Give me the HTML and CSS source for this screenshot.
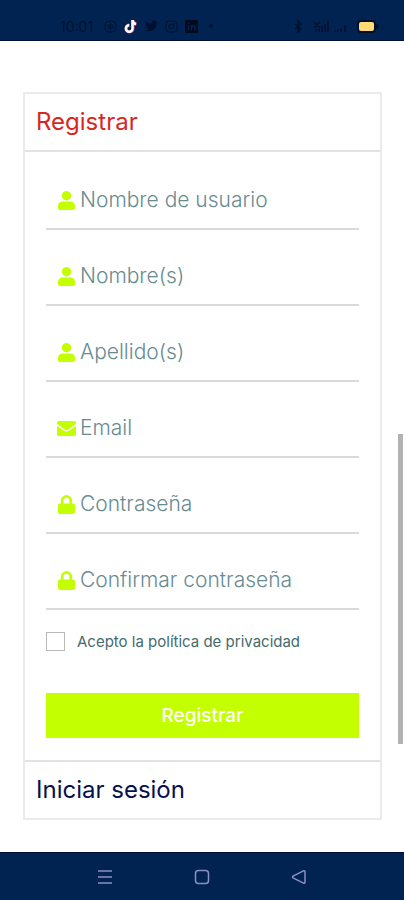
FILE: index.html
```html
<!DOCTYPE html>
<html lang="es">
<head>
<meta charset="utf-8">
<meta name="viewport" content="width=device-width, initial-scale=1">
<title>Registrar</title>
<link rel="stylesheet" href="styles.css">
</head>
<body>
<svg class="sprite" aria-hidden="true">
  <symbol id="user" viewBox="0 0 18 20"><circle cx="9" cy="5" r="5"/><path d="M5 11h8c3 0 5 2 5 5v2c0 1-1 2-2 2H2c-1 0-2-1-2-2v-2c0-3 2-5 5-5z"/></symbol>
  <symbol id="mail" viewBox="0 0 20 16"><path d="M2 0h16c1 0 2 1 2 2v1l-8 6c-1 1-3 1-4 0L0 3V2C0 1 1 0 2 0zM0 5l7 5c2 1.500 4 1.500 6 0l7-5v9c0 1-1 2-2 2H2c-1 0-2-1-2-2z"/></symbol>
  <symbol id="lock" viewBox="0 0 18 20"><path fill-rule="evenodd" d="M3 9V6a6 6 0 0 1 12 0v3h1c1 0 2 1 2 2v7c0 1-1 2-2 2H2c-1 0-2-1-2-2v-7c0-1 1-2 2-2zm3 0h6V6a3 3 0 0 0-6 0z"/></symbol>
</svg>
<header class="status">
  <div class="status-left">
    <time>10:01</time>
    <svg width="13" height="13" viewBox="0 0 13 13" fill="none" stroke="currentColor"><rect x="1" y="1" width="11" height="11" rx="4"/><circle cx="6.500" cy="6.500" r="2.500"/><path d="M6.500 5v3M5 6.500h3"/></svg>
    <svg width="14" height="15" viewBox="0 0 14 15" fill="none" stroke-width="3"><path stroke="#e0486c" d="M9 1v8.500a3.500 3.500 0 1 1-3.500-3.500M9 1.500c.3 2 1.500 3.200 3.500 3.500"/><path stroke="#fff" stroke-width="2.500" d="M8.500 1v8.500a3.300 3.300 0 1 1-3.300-3.300M8.500 1.500c.3 2 1.500 3.200 3.500 3.500"/></svg>
    <svg width="13" height="12" viewBox="0 0 24 22" fill="currentColor"><path d="M24 3c-1 .4-2 .7-3 .8 1-.6 2-1.600 2.300-2.800-1 .6-2 1-3.200 1.200A5 5 0 0 0 11.700 7C7.500 6.800 4 4.900 1.500 1.900.3 4 .8 7 3 8.500c-.8 0-1.600-.2-2.200-.6 0 2.500 1.600 4.400 4 5-.8.200-1.500.2-2.200.1.600 2 2.400 3.400 4.600 3.400A10 10 0 0 1 0 18.500C9 24 21.500 19 21.500 5.500 22.500 5 23.400 4 24 3z"/></svg>
    <svg width="13" height="13" viewBox="0 0 13 13" fill="none" stroke="currentColor"><rect x="1" y="1" width="11" height="11" rx="3"/><circle cx="6.500" cy="6.500" r="2.500"/><circle cx="9.500" cy="3.500" r=".4"/></svg>
    <svg width="13" height="13" viewBox="0 0 13 13"><rect width="13" height="13" rx="1" fill="#000a1c"/><path d="M3.500 5v5.500M3.500 2.500v1.500M6.500 10.500V5M6.500 8c0-3 3.500-3 3.500 0v2.500" fill="none" stroke="#002352" stroke-width="1.500"/></svg>
    <i class="dot"></i>
  </div>
  <div class="status-right">
    <svg width="9" height="13" viewBox="0 0 9 13" fill="none" stroke="currentColor" stroke-width="1.500"><path d="M1 4l6 5-3 3V1l3 3-6 5"/></svg>
    <svg width="34" height="13" viewBox="0 0 34 13" fill="none" stroke="currentColor" stroke-width="1.500"><path d="M1 2l6 6M7 2L1 8M3 12V9M6 12V9M9 12V6M12 12V4M15 12V1M22 12v-2M25 12v-3M28 12V8M32 12V5"/></svg>
    <svg width="22" height="13" viewBox="0 0 22 13"><rect x="1" y="1" width="17" height="11" rx="3" fill="#ffdc73" stroke="#00102c" stroke-width="2"/><path d="M19 4h1c1 0 2 1 2 2.500S21 9 20 9h-1z" fill="#00102c"/></svg>
  </div>
</header>
<main class="page">
  <section class="card">
    <h2 class="card-title active">Registrar</h2>
    <form class="form">
      <label class="field"><svg class="icon"><use href="#user"/></svg><input type="text" placeholder="Nombre de usuario" aria-label="Nombre de usuario"></label>
      <label class="field"><svg class="icon"><use href="#user"/></svg><input type="text" placeholder="Nombre(s)" aria-label="Nombre(s)"></label>
      <label class="field"><svg class="icon"><use href="#user"/></svg><input type="text" placeholder="Apellido(s)" aria-label="Apellido(s)"></label>
      <label class="field"><svg class="icon"><use href="#mail"/></svg><input type="email" placeholder="Email" aria-label="Email"></label>
      <label class="field"><svg class="icon"><use href="#lock"/></svg><input type="password" placeholder="Contraseña" aria-label="Contraseña"></label>
      <label class="field"><svg class="icon"><use href="#lock"/></svg><input type="password" placeholder="Confirmar contraseña" aria-label="Confirmar contraseña"></label>
      <label class="consent"><input type="checkbox"><span>Acepto la política de privacidad</span></label>
      <button class="submit" type="submit">Registrar</button>
    </form>
    <h2 class="card-title login">Iniciar sesión</h2>
  </section>
  <div class="scroll-thumb"></div>
</main>
<nav class="navbar">
  <button type="button" aria-label="Recientes"><svg width="16" height="16" viewBox="0 0 16 16" fill="none" stroke="currentColor" stroke-width="1.500"><path d="M1 2h14M1 8h14M1 14h14"/></svg></button>
  <button type="button" aria-label="Inicio"><svg width="16" height="16" viewBox="0 0 16 16" fill="none" stroke="currentColor" stroke-width="1.500"><rect x="1.500" y="1.500" width="13" height="13" rx="3"/></svg></button>
  <button type="button" aria-label="Atrás"><svg width="16" height="16" viewBox="0 0 16 16" fill="none" stroke="currentColor" stroke-width="1.500" stroke-linejoin="round"><path d="M2 7.200L12.500 1.800q1.500-.5 1.500 1v10.400q0 1.500-1.500 1L2 8.800q-1-.8 0-1.600z"/></svg></button>
</nav>
</body>
</html>
```
FILE: styles.css
```css
* {
  box-sizing: border-box;
}

body {
  margin: 0;
  min-height: 100vh;
  display: flex;
  flex-direction: column;
  background: #fff;
  font-family: Inter, "Open Sans", sans-serif;
}

.sprite {
  display: none;
}

.status {
  display: flex;
  justify-content: space-between;
  height: 41px;
  padding: 12px 25px 0 60px;
  background: #002352;
  border-bottom: 1px solid #000f35;
  color: #00112f;
}

.status-left,
.status-right {
  display: flex;
  align-items: center;
  height: 28px;
  gap: 7px;
}

.status-right {
  gap: 10px;
}

.status time {
  width: 37px;
  font-size: 14px;
}

.dot {
  width: 4px;
  height: 4px;
  margin-left: 4px;
  border-radius: 50%;
  background: currentColor;
}

.page {
  position: relative;
  flex: 1;
  padding: 51px 22px 32px 23px;
}

.card {
  border: 2px solid #ebebeb;
}

.card-title {
  margin: 0;
  padding: 0 11px;
  font-size: 24px;
  font-weight: 400;
  line-height: 56px;
}

.active {
  color: #d9261f;
  border-bottom: 2px solid #e2e2e2;
}

.login {
  color: #08114d;
  border-top: 2px solid #e2e2e2;
}

.form {
  padding: 2px 21px 22px;
}

.field {
  display: flex;
  align-items: center;
  gap: 4px;
  padding: 28px 0 10px 11px;
  border-bottom: 2px solid #dadada;
}

.icon {
  flex: none;
  width: 19px;
  height: 19px;
  fill: #c4ff00;
}

.field input {
  flex: 1;
  min-width: 0;
  height: 36px;
  padding: 0;
  border: 0;
  outline: 0;
  background: none;
  font: 300 21px/36px Inter, "Open Sans", sans-serif;
  color: #47696f;
}

.field input::placeholder {
  color: #688b91;
  opacity: 1;
}

.consent {
  display: flex;
  align-items: center;
  gap: 12px;
  margin: 22px 0 42px;
  font-size: 15px;
  line-height: 19px;
  color: #456a6c;
}

.consent input {
  appearance: none;
  width: 19px;
  height: 19px;
  margin: 0;
  border: 1px solid #bcb8b8;
  background: #fff;
}

.submit {
  display: block;
  width: 100%;
  height: 45px;
  border: 0;
  background: #c4ff00;
  color: #fff;
  font: 500 19px Inter, "Open Sans", sans-serif;
}

.scroll-thumb {
  position: absolute;
  top: 393px;
  right: 1px;
  width: 5px;
  height: 310px;
  background: #b3b3b3;
}

.navbar {
  display: flex;
  justify-content: center;
  gap: 81px;
  height: 49px;
  padding-bottom: 1px;
  background: #002352;
  border-top: 1px solid #000f35;
}

.navbar button {
  display: flex;
  align-items: center;
  padding: 0;
  border: 0;
  background: none;
  color: #8c8fc4;
}
```
